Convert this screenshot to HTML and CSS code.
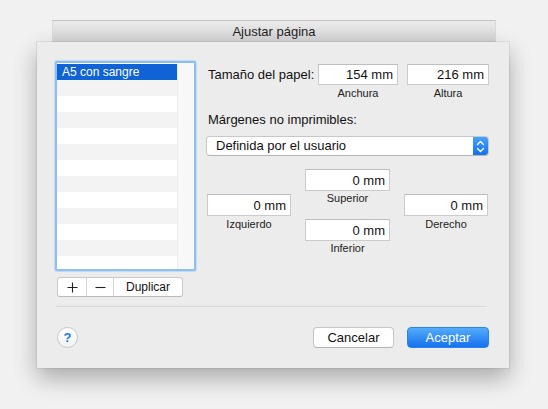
FILE: index.html
```html
<!DOCTYPE html>
<html lang="es">
<head>
<meta charset="utf-8">
<title>Ajustar página</title>
<link rel="stylesheet" href="styles.css">
</head>
<body>
<div class="desk">
  <div class="titlebar">Ajustar página</div>
  <div class="sheet">
    <div class="main">
      <div class="left">
        <div class="list">
          <div class="rows">
            <div class="row sel">A5 con sangre</div>
            <div class="row"></div>
            <div class="row"></div>
            <div class="row"></div>
            <div class="row"></div>
            <div class="row"></div>
            <div class="row"></div>
            <div class="row"></div>
            <div class="row"></div>
            <div class="row"></div>
            <div class="row"></div>
            <div class="row"></div>
            <div class="row"></div>
          </div>
          <div class="scroll"></div>
        </div>
        <div class="seg">
          <span class="seg-btn plus"><svg width="11" height="11" viewBox="0 0 11 11"><path d="M5.5 0.5v10M0.5 5.5h10" stroke="#222" stroke-width="1.1" fill="none"/></svg></span>
          <span class="seg-btn minus"><svg width="11" height="11" viewBox="0 0 11 11"><path d="M0.5 5.5h10" stroke="#222" stroke-width="1.1" fill="none"/></svg></span>
          <span class="seg-btn dup">Duplicar</span>
        </div>
      </div>
      <div class="right">
        <div class="size-row">
          <div class="size-label">Tamaño del papel:</div>
          <div class="fcol w80">
            <div class="field">154 mm</div>
            <div class="sub">Anchura</div>
          </div>
          <div class="fcol w82">
            <div class="field">216 mm</div>
            <div class="sub">Altura</div>
          </div>
        </div>
        <div class="section-label">Márgenes no imprimibles:</div>
        <div class="popup">
          <span class="popup-text">Definida por el usuario</span>
          <span class="stepper"><svg width="9" height="13" viewBox="0 0 9 13"><path d="M1.5 4.5l3-3 3 3M1.5 8.5l3 3 3-3" stroke="#fff" stroke-width="1.4" fill="none" stroke-linecap="round" stroke-linejoin="round"/></svg></span>
        </div>
        <div class="margins">
          <div class="mcol side">
            <div class="field mfield">0 mm</div>
            <div class="sub">Izquierdo</div>
          </div>
          <div class="mcol mid">
            <div class="field mfield">0 mm</div>
            <div class="sub tight">Superior</div>
            <div class="field mfield gap-top">0 mm</div>
            <div class="sub tight">Inferior</div>
          </div>
          <div class="mcol side">
            <div class="field mfield">0 mm</div>
            <div class="sub">Derecho</div>
          </div>
        </div>
      </div>
    </div>
    <div class="sep"></div>
    <div class="footer">
      <div class="help">?</div>
      <div class="spacer"></div>
      <div class="btn cancel">Cancelar</div>
      <div class="btn ok">Aceptar</div>
    </div>
  </div>
</div>
</body>
</html>
```

FILE: styles.css
```css
html, body {
  margin: 0;
  padding: 0;
}
body {
  width: 548px;
  height: 409px;
  overflow: hidden;
  background: #f1f1f1;
  font-family: "Liberation Sans", Arial, sans-serif;
  color: #111;
}
.desk {
  padding-top: 20px;
}
.titlebar {
  margin-left: 52px;
  width: 444px;
  height: 22px;
  box-sizing: border-box;
  border-top: 1px solid #c4c4c4;
  border-left: 1px solid #dadada;
  border-right: 1px solid #dadada;
  background: linear-gradient(#ebebeb, #d3d3d3);
  text-align: center;
  font-size: 13px;
  line-height: 21px;
  color: #1e1e1e;
}
.sheet {
  margin-left: 37px;
  width: 472px;
  height: 326px;
  box-sizing: border-box;
  background: #ececec;
  padding: 19px 20px 0 18px;
  box-shadow: 0 10px 22px rgba(0, 0, 0, 0.3), 0 0 0 1px rgba(0, 0, 0, 0.06);
}
.main {
  display: flex;
  gap: 10px;
}
.left {
  width: 141px;
}
.list {
  height: 210px;
  box-sizing: border-box;
  border: 2px solid #8ebfee;
  box-shadow: 0 0 0 1px #c2dcf5;
  border-radius: 2px;
  display: flex;
  background: #fff;
  overflow: hidden;
}
.rows {
  flex: 1;
  padding-top: 1px;
}
.row {
  height: 16px;
  font-size: 12px;
  line-height: 16px;
  padding-left: 5px;
  background: #fff;
}
.row:nth-child(even) {
  background: #f3f3f3;
}
.row.sel {
  background: #0f63d4;
  color: #fff;
}
.scroll {
  width: 16px;
  background: #f8f8f8;
  border-left: 1px solid #ededed;
}
.seg {
  margin-top: 6px;
  margin-left: 2px;
  width: 126px;
  height: 20px;
  box-sizing: border-box;
  display: flex;
  background: #fff;
  border: 1px solid #c9c9c9;
  border-bottom-color: #b9b9b9;
  border-radius: 3px;
}
.seg-btn {
  display: flex;
  align-items: center;
  justify-content: center;
  font-size: 12px;
  color: #111;
}
.plus {
  width: 28px;
  border-right: 1px solid #d6d6d6;
}
.minus {
  width: 26px;
  border-right: 1px solid #d6d6d6;
}
.dup {
  flex: 1;
}
.right {
  width: 283px;
  padding-top: 3px;
}
.size-row {
  display: flex;
  align-items: flex-start;
}
.size-label {
  width: 110px;
  padding-left: 2px;
  font-size: 13px;
  line-height: 21px;
}
.fcol {
  display: flex;
  flex-direction: column;
}
.w80 {
  width: 80px;
  margin-right: 9px;
}
.w82 {
  width: 82px;
}
.field {
  height: 21px;
  box-sizing: border-box;
  background: #fff;
  border: 1px solid #cbcbcb;
  border-top-color: #bdbdbd;
  text-align: right;
  padding-right: 4px;
  font-size: 13px;
  line-height: 20px;
  color: #111;
}
.sub {
  margin-top: 2px;
  text-align: center;
  font-size: 11px;
  line-height: 13px;
  color: #222;
}
.sub.tight {
  margin-top: 1px;
}
.section-label {
  margin-top: 12px;
  padding-left: 2px;
  font-size: 13px;
  line-height: 16px;
}
.popup {
  margin-top: 8px;
  height: 20px;
  box-sizing: border-box;
  background: #fff;
  border: 1px solid #c8c8c8;
  border-bottom-color: #b5b5b5;
  border-radius: 4px;
  display: flex;
  align-items: stretch;
}
.popup-text {
  flex: 1;
  padding-left: 9px;
  font-size: 13px;
  line-height: 18px;
}
.stepper {
  width: 15px;
  background: linear-gradient(#47a2fa, #1470ee);
  border-radius: 0 3px 3px 0;
  display: flex;
  align-items: center;
  justify-content: center;
}
.margins {
  margin-top: 13px;
  padding-left: 1px;
  display: grid;
  grid-template-columns: 84px 85px 84px;
  column-gap: 14px;
  align-items: center;
}
.mfield {
  height: 22px;
  line-height: 21px;
}
.gap-top {
  margin-top: 14px;
}
.mcol {
  display: flex;
  flex-direction: column;
}
.sep {
  margin-top: 9px;
  margin-left: 1px;
  width: 431px;
  height: 1px;
  background: #d8d8d8;
}
.footer {
  margin-top: 20px;
  display: flex;
  align-items: center;
}
.help {
  margin-left: 2px;
  width: 21px;
  height: 21px;
  box-sizing: border-box;
  border-radius: 50%;
  background: linear-gradient(#ffffff, #f3f3f3);
  border: 1px solid #c6c6c6;
  color: #1a7af0;
  font-weight: bold;
  font-size: 13px;
  line-height: 19px;
  text-align: center;
}
.spacer {
  flex: 1;
}
.btn {
  height: 21px;
  box-sizing: border-box;
  border-radius: 4px;
  font-size: 13px;
  line-height: 19px;
  text-align: center;
}
.cancel {
  width: 81px;
  margin-right: 13px;
  background: #fff;
  border: 1px solid #c6c6c6;
  border-bottom-color: #b3b3b3;
  color: #111;
}
.ok {
  width: 82px;
  background: linear-gradient(#53acfb, #1672ef);
  border: 1px solid #2a83ef;
  color: #fff;
}
```
